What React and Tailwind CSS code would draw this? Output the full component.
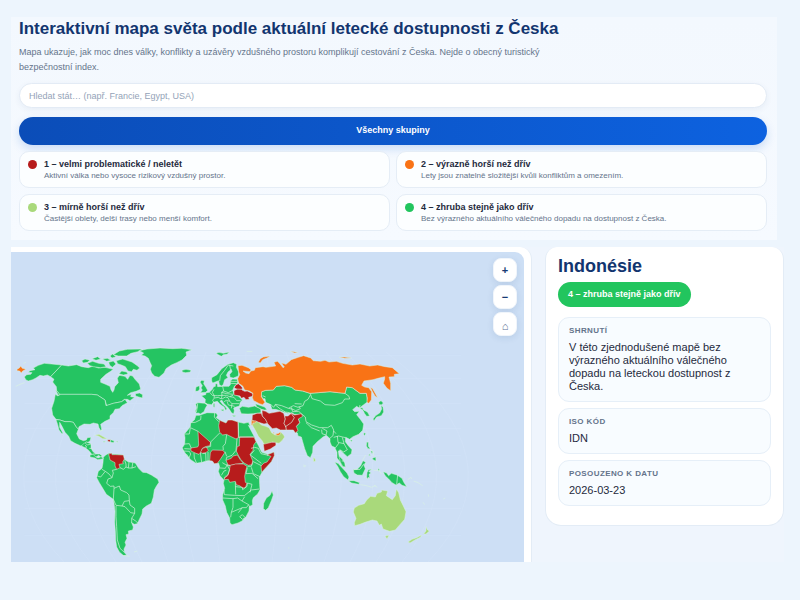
import React, { useState } from "react";

const GROUPS = [
  { id: 1, color: "bg-[#b71c1c]", title: "1 – velmi problematické / neletět", text: "Aktivní válka nebo vysoce rizikový vzdušný prostor." },
  { id: 2, color: "bg-[#f97316]", title: "2 – výrazně horší než dřív", text: "Lety jsou znatelně složitější kvůli konfliktům a omezením." },
  { id: 3, color: "bg-[#a9d97b]", title: "3 – mírně horší než dřív", text: "Častější oblety, delší trasy nebo menší komfort." },
  { id: 4, color: "bg-[#22c55e]", title: "4 – zhruba stejně jako dřív", text: "Bez výrazného aktuálního válečného dopadu na dostupnost z Česka." },
];

const DETAILS = [
  { label: "Shrnutí", value: "V této zjednodušené mapě bez výrazného aktuálního válečného dopadu na leteckou dostupnost z Česka." },
  { label: "ISO kód", value: "IDN" },
  { label: "Posouzeno k datu", value: "2026-03-23" },
];

const GREEN = "#25c462";
const RED = "#b71c1c";
const ORANGE = "#f97316";
const LIME = "#a9d97b";

// Every region has its own origin; shapes are [fill, path] in local units
const REGIONS = [
  {
    name: "North America",
    x: -3,
    y: 264,
    shapes: [
      [GREEN, "M43 111L50 104L62 103L66 98L55 97L60 92L75 89L70 84L85 76L103 70L125 72L155 75L122 110L112 105L100 108L90 106L78 114L68 119L55 123L48 120Z"],
      [GREEN, "M155 75L175 78L200 74L215 80L235 83L250 78L265 84L285 82L310 88L302 94L288 103L272 118L272 127L285 132L300 139L303 149L308 157L312 150L314 140L325 128L322 115L328 106L345 109L353 118L360 106L368 108L375 118L388 132L392 148L378 154L362 158L352 166L364 163L362 170L374 172L360 182L352 178L343 178L335 185L310 190L290 197L285 180L262 165L245 163L148 163L140 152L139 140L128 126L132 118L122 110Z"],
      [GREEN, "M148 163L245 163L262 165L285 180L288 197L310 190L335 185L345 178L352 188L336 197L328 206L315 208L310 218L300 227L300 237L285 244L272 253L275 268L273 273L267 263L264 252L250 249L240 253L222 252L207 260L205 268L198 260L190 247L180 245L165 245L150 240L138 238L128 225L125 205L132 184L136 163L144 168Z"],
      [GREEN, "M138 239L150 240L165 245L180 245L190 247L198 260L205 268L200 281L208 297L220 302L229 300L232 293L243 292L240 303L234 307L228 306L225 316L213 318L195 310L182 302L176 289L165 277L156 259L149 247L149 262L158 278L157 283L147 270L143 254Z"],
      [GREEN, "M214 318L223 309L229 306L243 311L243 323L248 334L257 342L269 342L276 347L273 352L266 346L257 352L247 345L237 332L227 324Z"],
      [GREEN, "M388 32L411 27L450 24L488 26L515 25L546 29L528 36L530 46L516 60L500 68L484 75L468 86L462 99L447 112L434 109L425 99L421 88L425 77L420 67L415 55L405 48L394 46L401 39Z"],
      [GREEN, "M516 91L528 88L543 91L541 96L527 98L517 96Z"],
      [GREEN, "M232 70L248 64L266 70L282 72L288 80L271 83L250 80L240 77Z"],
      [GREEN, "M215 62L225 57L240 61L232 67L220 69Z"],
      [GREEN, "M246 56L263 50L272 57L258 61ZM277 57L292 55L303 61L290 64ZM296 67L310 63L318 72L307 82L299 76Z"],
      [GREEN, "M310 44L328 33L352 28L396 27L383 35L363 40L350 48L325 48ZM300 48L308 42L318 50L306 54Z"],
      [GREEN, "M319 62L338 57L350 61L366 66L382 77L389 84L381 91L370 88L365 95L354 93L346 80L334 75L323 71Z"],
      [GREEN, "M335 93L350 96L354 102L340 105L327 101Z"],
      [GREEN, "M376 161L389 159L398 164L397 174L386 171L377 168Z"],
      [GREEN, "M137 149L143 155L150 165L144 165Z"],
      [LIME, "M254 286L267 283L283 292L292 297L278 296L265 288Z"],
      [RED, "M293 299L302 299L301 306L293 304Z"],
      [GREEN, "M302 299L313 303L310 308L301 306ZM279 304L287 305L282 307ZM318 304L323 304L322 307Z"],
      [ORANGE, "M21 88L28 84L32 78L37 85L48 88L38 93L34 99L29 93L21 92Z"],
    ],
    lines: "M17 139L30 133L44 128M40 70L48 67M268 275L279 269M225 316L229 318L228 324M238 325L247 326M248 342L257 342M323 102L330 106M226 309L232 315L243 312",
  },
  {
    name: "South America",
    x: 237,
    y: 564,
    shapes: [
      [GREEN, "M40 52L47 45L58 39L68 42L82 43L100 45L103 58L114 65L136 69L146 85L158 97L170 98L184 105L203 117L207 127L199 139L193 150L190 171L184 190L169 198L158 207L156 222L149 236L142 251L133 253L125 248L130 261L128 270L115 273L116 282L108 284L111 295L105 307L108 315L102 327L103 337L110 346L101 347L88 336L80 321L77 300L76 273L74 246L75 214L72 190L70 178L49 163L40 148L28 128L20 113L25 94L36 85L39 68Z"],
      [RED, "M56 42L65 39L66 44L77 44L100 45L103 57L98 66L100 71L87 73L90 83L80 88L75 78L75 68L60 60Z"],
      [GREEN, "M0 45L9 43L18 51L24 54L33 50L40 55L36 57L23 59L15 54L0 51Z"],
    ],
    lines: "M80 88L67 91L70 99L66 113L54 117L50 130L61 139L72 138L72 145L88 138L92 150L110 158L117 165L118 182L103 184L96 198L78 196L70 178L72 145M22 108L32 111L46 94L36 88M46 94L57 102L66 113M78 198L78 230L80 260L82 300L90 325L103 337M118 182L120 195L134 205L134 220L122 218L105 200L96 198M134 220L125 235L125 249M125 235L137 243L144 250M104 61L108 72L108 81M117 66L115 84M128 69L126 84M138 80L126 84L115 84L108 81L100 88L90 83M132 336L142 333M98 346L119 349",
  },
  {
    name: "Europe",
    x: 507,
    y: 264,
    shapes: [
      [GREEN, "M47 192L53 188L75 190L82 195L76 205L72 215L61 222L55 219L49 220L46 213L50 203Z"],
      [GREEN, "M64 167L77 164L78 158L88 157L97 148L101 140L106 139L106 132L112 128L113 140L130 139L147 139L151 134L151 123L158 117L172 118L173 130L163 139L158 151L162 163L176 169L187 180L181 187L178 198L165 202L161 204L163 212L161 221L155 219L148 208L142 200L132 191L126 181L120 183L126 191L137 201L141 207L137 211L132 201L120 193L112 184L100 187L95 194L82 192L75 188L76 178Z"],
      [GREEN, "M60 126L65 121L73 122L71 131L78 142L83 151L77 157L61 158L67 150L63 144L67 137Z"],
      [GREEN, "M48 141L58 137L59 147L55 153L46 154Z"],
      [GREEN, "M95 123L95 113L111 104L125 86L144 73L160 68L170 73L169 82L176 96L175 108L160 114L150 112L149 103L156 95L154 88L144 96L139 106L144 113L134 119L130 133L125 138L118 134L116 122L106 126L98 129Z"],
      [GREEN, "M108 40L117 37L130 40L148 36L141 43L130 44L124 49L115 44Z"],
      [GREEN, "M100 191L104 190L104 202L100 201ZM121 209L132 208L130 214ZM155 226L169 227L162 230Z"],
      [RED, "M162 152L170 148L163 143L167 135L175 131L182 137L187 143L186 150L194 154L202 153L219 161L218 169L206 172L208 178L198 179L192 172L184 175L180 168L162 165Z"],
    ],
    lines: "M53 190L52 201L49 216M75 190L83 194M89 157L97 166L103 167L102 175L98 181L102 188M102 148L97 157L103 167L113 167L126 166L125 157L131 153L128 139M131 153L145 158L158 151M125 157L140 161L160 163M103 174L115 172L124 177L126 166L139 166L149 170L159 166M126 177L136 171L144 173L149 184L139 181L132 185M149 170L162 172L170 182L182 182M149 184L156 191L178 191M141 184L145 195L155 197L164 199M156 191L154 205M151 130L172 131M151 124L171 124M107 131L114 131M167 147L186 148M149 75L152 91M119 123L121 107L133 92L145 75L160 78M62 160L70 163M200 34L217 34",
  },
  {
    name: "Africa",
    x: 492,
    y: 444,
    shapes: [
      [GREEN, "M63 46L73 46L96 38L123 39L128 46L124 53L137 62L153 69L159 60L171 60L189 66L207 70L220 67L226 78L220 76L230 95L238 110L243 124L250 136L260 157L278 163L297 156L298 166L289 185L269 207L260 219L253 232L254 254L255 269L248 282L235 293L232 302L233 314L223 320L222 333L213 350L201 363L189 369L171 374L165 369L164 354L155 337L151 318L143 300L143 284L149 265L145 250L147 241L135 227L130 214L134 202L131 190L122 189L112 181L94 183L81 187L63 190L47 179L34 164L25 151L22 143L29 133L30 113L28 102L40 88L46 80L47 69L58 60Z"],
      [RED, "M134 61L153 69L159 60L171 60L189 66L190 113L183 117L154 103L143 105L134 97L131 77Z"],
      [RED, "M69 94L103 124L107 128L104 137L91 140L81 146L79 156L72 163L63 160L48 153L47 144L68 141L71 135Z"],
      [RED, "M76 157L83 145L94 141L100 151L93 158L83 160Z"],
      [RED, "M106 158L112 150L144 151L149 158L136 178L127 190L118 191L112 183L104 182Z"],
      [RED, "M194 110L237 111L243 125L236 135L234 151L225 163L233 182L231 194L220 196L207 189L197 178L190 166L184 153L187 139L193 138Z"],
      [RED, "M153 181L169 175L174 168L187 165L195 178L205 190L181 193L167 196L160 197Z"],
      [RED, "M166 196L182 192L205 192L216 199L212 214L209 229L211 247L216 250L211 263L202 264L196 258L184 254L181 244L164 247L160 238L147 239L150 230L160 223L163 210Z"],
      [RED, "M260 217L258 198L267 189L276 186L288 169L276 165L297 156L298 167L289 185L269 207Z"],
      [GREEN, "M265 326L266 310L274 294L285 286L291 273L295 285L289 302L280 323L272 331Z"],
      [GREEN, "M194 34L200 24L229 24L246 31L246 39L229 37L214 42L200 38Z"],
      [LIME, "M230 72L241 65L250 65L259 75L272 79L282 83L290 98L300 105L312 103L317 96L326 105L329 111L321 122L312 130L300 128L292 126L269 137L262 123L250 109L241 91Z"],
      [RED, "M265 133L290 127L302 127L303 136L286 147L268 154Z"],
      [ORANGE, "M300 102L311 100L316 95L316 103L309 107ZM229 59L233 60L243 61L243 67L233 71L233 76L229 75ZM294 96L298 98L296 102Z"],
    ],
    lines: "M47 68L61 67L77 59L78 47M29 102L43 102L46 83L69 94M119 39L118 51L131 65M134 99L107 126M107 126L107 139L95 142M155 104L151 131L144 139L145 150M30 132L43 131L49 145M28 146L46 147M24 153L43 154L47 162L42 174L34 162M57 159L58 174L65 190M76 158L80 187M83 160L92 160L93 183M99 156L99 183M186 116L183 151L171 166L155 172L153 181M150 155L155 169M142 188L152 194L165 196M135 204L151 205L156 195L164 209L158 227L147 235M139 226L147 213L154 211M190 67L191 113L194 112L236 111M228 145L239 142L250 145L258 161L280 166M233 184L259 197M218 199L229 199L233 187M229 202L235 221L255 230M217 203L213 221L231 220L249 236M147 270L148 284L179 286L208 287L229 270L253 267M181 247L182 283M181 260L202 262L203 269L216 259L217 249L231 253L225 277M144 294L174 296L188 294L201 303L209 290M174 296L174 322L169 337L183 331L202 323M169 337L167 352M201 303L221 314L214 323L202 323L190 338M221 314L226 326M202 344L211 353L202 358L194 350Z M238 151L226 165L259 190",
  },
  {
    name: "Asia",
    x: 657,
    y: 264,
    shapes: [
      [GREEN, "M95 155L107 151L130 150L139 139L164 137L185 142L195 150L218 153L240 160L265 158L300 155L325 158L345 160L350 141L367 143L390 160L409 160L411 171L412 186L400 195L388 204L380 199L368 209L374 215L388 214L380 224L391 238L401 252L398 271L386 283L369 290L359 298L347 292L346 305L355 317L366 329L364 341L352 350L342 341L331 331L325 333L327 347L337 357L344 371L346 382L336 377L330 365L321 354L321 337L314 322L305 318L300 306L300 296L289 286L279 291L262 305L249 319L248 337L241 353L232 347L224 326L218 305L214 291L204 288L202 279L193 274L199 259L209 248L205 237L212 224L193 223L186 218L173 220L160 216L151 212L137 208L126 208L121 193L107 187L105 176L98 176L94 165Z"],
      [GREEN, "M28 205L37 199L56 202L74 198L82 202L92 206L93 218L70 221L54 222L34 221Z"],
      [GREEN, "M76 191L89 196L104 201L111 209L104 210L95 208L80 200Z"],
      [GREEN, "M388 203L397 203L403 211L413 217L419 228L410 229L404 221L399 211Z"],
      [ORANGE, "M24 77L36 76L55 83L63 89L61 95L39 93L47 99L57 101L62 93L73 91L76 83L99 80L108 82L130 79L137 78L132 67L142 64L148 69L159 83L163 81L154 69L168 73L184 59L205 52L221 47L242 54L250 62L272 64L285 61L297 66L319 64L338 70L367 75L390 72L419 78L443 75L465 80L487 83L508 101L493 103L493 110L477 111L482 130L482 152L471 145L460 130L464 117L464 110L444 115L429 119L402 123L395 136L404 141L416 143L425 155L424 180L416 190L411 187L412 174L409 160L390 160L367 143L350 141L345 160L325 158L300 155L265 158L240 160L218 153L195 150L185 142L164 137L139 139L130 150L107 151L95 155L94 170L105 187L98 194L88 191L71 182L67 173L69 160L58 153L44 150L38 138L26 130L23 116L29 104L26 95Z"],
      [ORANGE, "M85 67L91 56L100 51L121 48L111 54L98 59L91 69ZM181 34L192 35L204 38L194 39ZM327 52L343 51L364 54L345 55ZM421 142L428 146L438 164L443 173L435 168L427 154Z"],
      [RED, "M67 225L81 220L94 220L97 228L107 239L113 250L102 252L86 247L75 242L66 245Z"],
      [RED, "M96 211L107 214L117 220L134 217L150 214L161 220L166 237L162 250L168 261L169 270L151 270L139 264L127 266L113 251L107 239L97 228Z"],
      [RED, "M164 228L174 228L184 220L194 225L214 221L218 229L205 237L209 248L199 259L204 272L196 279L190 270L169 270L168 261L162 250L166 237Z"],
      [ORANGE, "M66 241L72 242L71 250L65 252Z"],
      [GREEN, "M446 187L453 182L460 189L455 194L448 194ZM453 196L459 202L461 216L454 227L440 231L432 242L429 237L438 226L449 219L455 207Z"],
    ],
    lines: "M241 161L246 176L271 183L285 194L314 196L337 188L344 177L359 177L357 169L345 160M241 165L234 178L224 184L219 197L204 202L190 197L175 205L155 197L136 193L131 202L121 192M176 205L189 208L197 212L211 206L207 199M135 194L151 207L166 216L179 218M184 202L188 215L206 214L214 221L226 231L228 245L245 255L269 263L293 263L304 256L311 270L309 287L298 296M228 248L244 263L269 273M277 265L291 273L288 285L276 281L275 269M318 281L311 273M311 292L326 288L338 291L347 293M322 288L324 307L342 311L337 292M315 325L327 309M342 311L352 329L341 336L329 329M397 207L405 211M98 167L107 171M184 221L193 233L185 247L165 261M194 191L215 192M388 203L390 195",
  },
  {
    name: "Oceania",
    x: 807,
    y: 414,
    shapes: [
      [GREEN, "M164 217L174 220L190 237L201 249L207 261L204 270L191 260L181 245L173 229Z"],
      [GREEN, "M205 272L222 272L239 278L236 283L215 279ZM177 198L186 207L194 219L196 230L189 230L181 216Z"],
      [GREEN, "M220 239L232 238L242 227L249 212L257 217L252 226L256 236L247 256L232 255L222 249Z"],
      [GREEN, "M261 248L265 239L276 238L266 244L273 249L267 253L269 265L264 262L263 268L260 262Z"],
      [GREEN, "M310 245L320 249L326 257L334 250L351 255L366 265L371 276L380 290L366 286L358 279L348 285L336 278L326 267L317 259L313 253Z"],
      [GREEN, "M260 157L265 156L265 169L271 176L264 176L259 168ZM277 205L287 201L288 213L279 209ZM272 184L279 183L276 191ZM268 191L271 197L266 196ZM252 128L257 130L254 137L251 133ZM211 150L217 150L214 156Z"],
      [GREEN, "M294 236L298 237L297 244L294 241Z"],
      [LIME, "M100 202L105 206L107 213L101 215Z"],
      [LIME, "M223 354L236 346L253 341L260 330L272 319L286 321L291 310L304 306L305 300L323 303L319 317L337 329L346 317L349 297L356 308L361 330L370 348L378 365L374 388L357 407L346 420L329 424L309 417L304 402L298 406L291 393L277 390L255 397L240 403L224 407L223 398L228 385L220 366Z"],
      [LIME, "M315 438L327 436L321 447ZM438 410L442 419L448 423L438 432L431 432L438 423ZM425 435L421 442L406 449L390 459L384 456L396 448L410 443Z"],
    ],
    lines: "M353 255L350 283M222 239L240 238L252 221M185 213L190 213M241 284L260 287L275 292L287 286M281 241L297 241L304 252M270 177L281 187L280 197M247 212L257 195M383 269L393 262L395 267M401 273L414 278L428 287M445 313L446 320M429 337L434 344M70 225L77 227L74 231L70 229M253 264L258 258M24 474L28 474M490 327L496 324M282 286L292 292",
  },
];

const mapButton =
  "flex h-6 w-6 items-center justify-center rounded-lg border border-[#f0f5fb] bg-white font-bold shadow-[0_2px_6px_rgba(30,64,120,0.10)]";

function WorldMap() {
  return (
    <svg viewBox="0 0 1539 930" className="block w-full" role="img" aria-label="Mapa světa">
      <g fill="none" stroke="#d2e2f7" strokeWidth="2">
        {[310, 380, 455, 530, 610, 690, 770, 850].map((y) => (
          <path key={y} d={`M40 ${y}H1350`} />
        ))}
        {[-7, -6, -5, -4, -3, -2, -1, 0, 1, 2, 3, 4, 5, 6, 7].map((n) => (
          <path key={n} d={`M${705 + n * 60} 300Q${705 + n * 120} 620 ${705 + n * 78} 930`} />
        ))}
      </g>
      {REGIONS.map((region) => (
        <g
          key={region.name}
          transform={`translate(${region.x} ${region.y})`}
          stroke="#d9f3e1"
          strokeLinejoin="round"
        >
          {region.shapes.map(([fill, d]) => (
            <path key={d} fill={fill} strokeWidth="1.5" d={d} />
          ))}
          <path fill="none" strokeWidth="2" d={region.lines} />
        </g>
      ))}
    </svg>
  );
}

export default function App() {
  const [query, setQuery] = useState("");

  return (
    <div className="min-h-screen bg-[#edf5fd] pt-[17px] pr-4 pl-[11px] font-['Liberation_Sans',Arial,sans-serif] text-[#1f2a3d]">
      {/* --- HEADER --- */}
      <header className="mr-[7px] bg-linear-to-b from-[#f3f8fe] to-[#f6faff] pr-[10px] pb-[9px] pl-2">
        <h1 className="text-[17px] leading-6 font-bold text-[#12356f]">
          Interaktivní mapa světa podle aktuální letecké dostupnosti z Česka
        </h1>
        <p className="mt-1 max-w-[550px] text-[9px] leading-[15px] text-[#64748b]">
          Mapa ukazuje, jak moc dnes války, konflikty a uzávěry vzdušného prostoru komplikují cestování z Česka. Nejde o
          obecný turistický bezpečnostní index.
        </p>
        <input
          type="search"
          aria-label="Hledat stát"
          value={query}
          onChange={(e) => setQuery(e.target.value)}
          placeholder="Hledat stát… (např. Francie, Egypt, USA)"
          className="mt-2 block h-[25px] w-full rounded-full border border-[#e3ebf5] bg-white px-[9px] text-[9px] shadow-[0_2px_6px_rgba(30,64,120,0.06)] outline-none placeholder:text-[#94a3b8]"
        />
        <button
          type="button"
          className="mt-[9px] block h-7 w-full rounded-full bg-linear-to-r from-[#0b4db8] to-[#0d62e0] text-[9px] font-bold text-white shadow-[0_4px_10px_rgba(13,86,204,0.18)]"
        >
          Všechny skupiny
        </button>
        <ul className="mt-[6px] grid grid-cols-2 gap-[6px]">
          {GROUPS.map((g) => (
            <li key={g.id} className="flex h-[37px] gap-[7px] rounded-[10px] border border-[#e5edf6] bg-[#fcfeff] px-2 pt-[7px]">
              <span className={`mt-px h-[9px] w-[9px] shrink-0 rounded-full ${g.color}`} />
              <div>
                <div className="text-[9px] leading-[11px] font-bold">{g.title}</div>
                <div className="text-[8px] leading-[11px] text-[#64748b]">{g.text}</div>
              </div>
            </li>
          ))}
        </ul>
      </header>

      {/* --- MAP + DETAIL --- */}
      <main className="mt-[7px] grid grid-cols-[minmax(0,521fr)_minmax(0,239fr)] items-start gap-[13px] bg-[#eff5fd]">
        <section className="relative rounded-tr-xl border-r border-[#e3ecf6] bg-white pt-[5px] pr-[7px]">
          <div className="overflow-hidden rounded-tr-[9px] bg-[#cddff5]">
            <WorldMap />
          </div>
          <div className="absolute top-[11px] right-[14px] flex flex-col gap-[3px]">
            <button type="button" aria-label="Přiblížit" className={`${mapButton} text-[11px] text-[#173a72]`}>+</button>
            <button type="button" aria-label="Oddálit" className={`${mapButton} text-[11px] text-[#173a72]`}>−</button>
            <button type="button" aria-label="Výchozí zobrazení" className={`${mapButton} pt-1 text-[11px] text-[#5b7196]`}>⌂</button>
          </div>
        </section>

        <aside className="rounded-t-xl rounded-b-2xl border border-t-0 border-[#e3ecf6] bg-white px-3 pt-2 pb-[19px]">
          <h2 className="text-[18px] leading-[22px] font-bold text-[#12356f]">Indonésie</h2>
          <div className="mt-[5px] flex">
            <span className="flex h-[25px] items-center rounded-full bg-[#22c55e] px-[10px] text-[9px] font-bold text-white">
              4 – zhruba stejně jako dřív
            </span>
          </div>
          <dl className="mt-[10px] flex flex-col gap-[6px]">
            {DETAILS.map((d) => (
              <div key={d.label} className="rounded-[11px] border border-[#e6eff8] bg-[#f8fcff] px-[10px] py-2">
                <dt className="text-[8px] leading-[10px] font-bold tracking-wider text-[#64748b] uppercase">{d.label}</dt>
                <dd className="mt-[5px] text-[11px] leading-[13px]">{d.value}</dd>
              </div>
            ))}
          </dl>
        </aside>
      </main>
    </div>
  );
}
